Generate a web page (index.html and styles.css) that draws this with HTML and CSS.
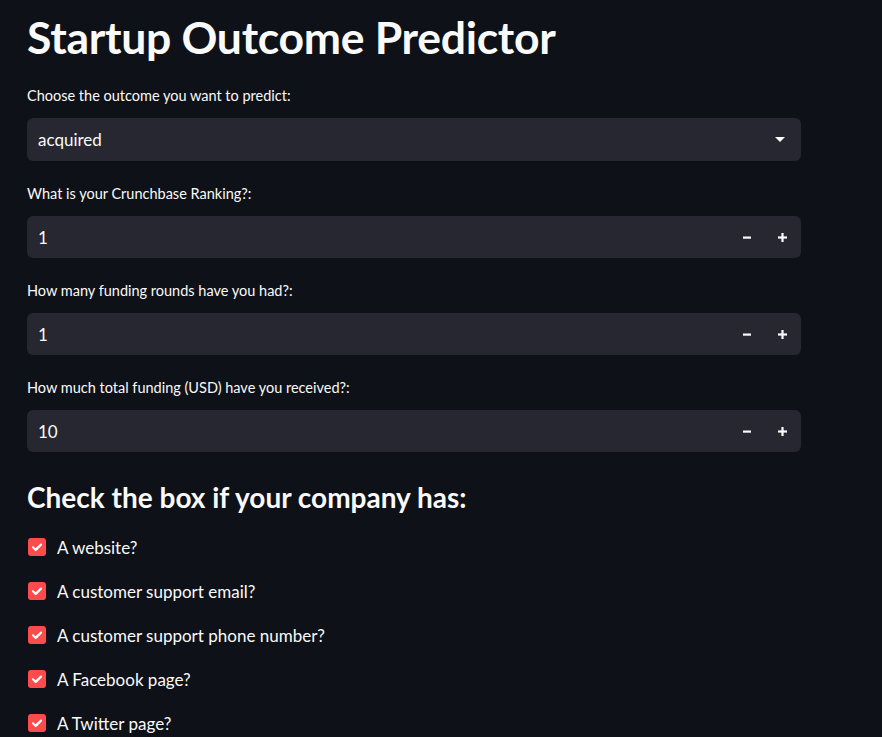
FILE: index.html
```html
<!DOCTYPE html>
<html lang="en">
<head>
<meta charset="utf-8">
<title>Startup Outcome Predictor</title>
<link rel="stylesheet" href="styles.css">
</head>
<body>
<main class="app">
  <h1 class="title">Startup Outcome Predictor</h1>

  <div class="field">
    <label class="label">Choose the outcome you want to predict:</label>
    <div class="control select">
      <span class="value">acquired</span>
      <svg class="caret" width="10" height="5" viewBox="0 0 10 5"><path d="M0 0h10L5 5z" fill="#fafafa"/></svg>
    </div>
  </div>

  <div class="field">
    <label class="label">What is your Crunchbase Ranking?:</label>
    <div class="control number">
      <span class="value">1</span>
      <span class="steps">
        <svg class="step" width="9" height="9" viewBox="0 0 9 9"><rect x="0" y="3.5" width="8" height="2.2" fill="#fafafa"/></svg>
        <svg class="step" width="9" height="9" viewBox="0 0 9 9"><rect x="0" y="3.4" width="9" height="2.2" fill="#fafafa"/><rect x="3.4" y="0" width="2.2" height="9" fill="#fafafa"/></svg>
      </span>
    </div>
  </div>

  <div class="field">
    <label class="label">How many funding rounds have you had?:</label>
    <div class="control number">
      <span class="value">1</span>
      <span class="steps">
        <svg class="step" width="9" height="9" viewBox="0 0 9 9"><rect x="0" y="3.5" width="8" height="2.2" fill="#fafafa"/></svg>
        <svg class="step" width="9" height="9" viewBox="0 0 9 9"><rect x="0" y="3.4" width="9" height="2.2" fill="#fafafa"/><rect x="3.4" y="0" width="2.2" height="9" fill="#fafafa"/></svg>
      </span>
    </div>
  </div>

  <div class="field">
    <label class="label">How much total funding (USD) have you received?:</label>
    <div class="control number">
      <span class="value">10</span>
      <span class="steps">
        <svg class="step" width="9" height="9" viewBox="0 0 9 9"><rect x="0" y="3.5" width="8" height="2.2" fill="#fafafa"/></svg>
        <svg class="step" width="9" height="9" viewBox="0 0 9 9"><rect x="0" y="3.4" width="9" height="2.2" fill="#fafafa"/><rect x="3.4" y="0" width="2.2" height="9" fill="#fafafa"/></svg>
      </span>
    </div>
  </div>

  <h3 class="subheader">Check the box if your company has:</h3>

  <ul class="checks">
    <li class="check"><span class="box"><svg width="18" height="18" viewBox="0 0 18 18"><path d="M5 9.3l2.7 2.6L13 6.6" fill="none" stroke="#fff" stroke-width="2.2" stroke-linecap="round" stroke-linejoin="round"/></svg></span>A website?</li>
    <li class="check"><span class="box"><svg width="18" height="18" viewBox="0 0 18 18"><path d="M5 9.3l2.7 2.6L13 6.6" fill="none" stroke="#fff" stroke-width="2.2" stroke-linecap="round" stroke-linejoin="round"/></svg></span>A customer support email?</li>
    <li class="check"><span class="box"><svg width="18" height="18" viewBox="0 0 18 18"><path d="M5 9.3l2.7 2.6L13 6.6" fill="none" stroke="#fff" stroke-width="2.2" stroke-linecap="round" stroke-linejoin="round"/></svg></span>A customer support phone number?</li>
    <li class="check"><span class="box"><svg width="18" height="18" viewBox="0 0 18 18"><path d="M5 9.3l2.7 2.6L13 6.6" fill="none" stroke="#fff" stroke-width="2.2" stroke-linecap="round" stroke-linejoin="round"/></svg></span>A Facebook page?</li>
    <li class="check"><span class="box"><svg width="18" height="18" viewBox="0 0 18 18"><path d="M5 9.3l2.7 2.6L13 6.6" fill="none" stroke="#fff" stroke-width="2.2" stroke-linecap="round" stroke-linejoin="round"/></svg></span>A Twitter page?</li>
  </ul>
</main>
</body>
</html>
```

FILE: styles.css
```css
html, body {
  margin: 0;
  padding: 0;
  background: #0e1117;
  color: #fafafa;
  font-family: Lato, "Open Sans", sans-serif;
  height: 100%;
  overflow: hidden;
}

.app {
  width: 774px;
  padding: 9px 0 0 27px;
  display: flex;
  flex-direction: column;
}

.title {
  margin: 0;
  font-size: 44.5px;
  font-weight: 700;
  line-height: 56px;
  letter-spacing: -0.3px;
}

.field {
  display: flex;
  flex-direction: column;
  gap: 12px;
  margin-top: 21px;
}

.field + .field {
  margin-top: 23px;
}

.label {
  font-size: 14.5px;
  line-height: 20px;
  height: 20px;
}

.control {
  background: #262730;
  border-radius: 6px;
  display: flex;
  align-items: center;
  padding: 0 12px 0 11px;
  font-size: 17px;
}

.select {
  height: 43px;
}

.number {
  height: 42px;
}

.value {
  flex: 1;
}

.caret {
  margin-right: 4px;
}

.steps {
  display: flex;
  align-items: center;
  gap: 26px;
  margin-right: 2px;
}

.step {
  display: block;
}

.subheader {
  margin: 25px 0 0;
  font-size: 28px;
  font-weight: 700;
  line-height: 40px;
}

.checks {
  list-style: none;
  margin: 18px 0 0;
  padding: 0 0 0 1px;
  display: flex;
  flex-direction: column;
  gap: 20px;
}

.check {
  display: flex;
  align-items: center;
  gap: 11px;
  height: 24px;
  font-size: 17px;
}

.box {
  width: 18px;
  height: 18px;
  border-radius: 3px;
  background: #ff4b4b;
  display: block;
}

.box svg {
  display: block;
}
```
